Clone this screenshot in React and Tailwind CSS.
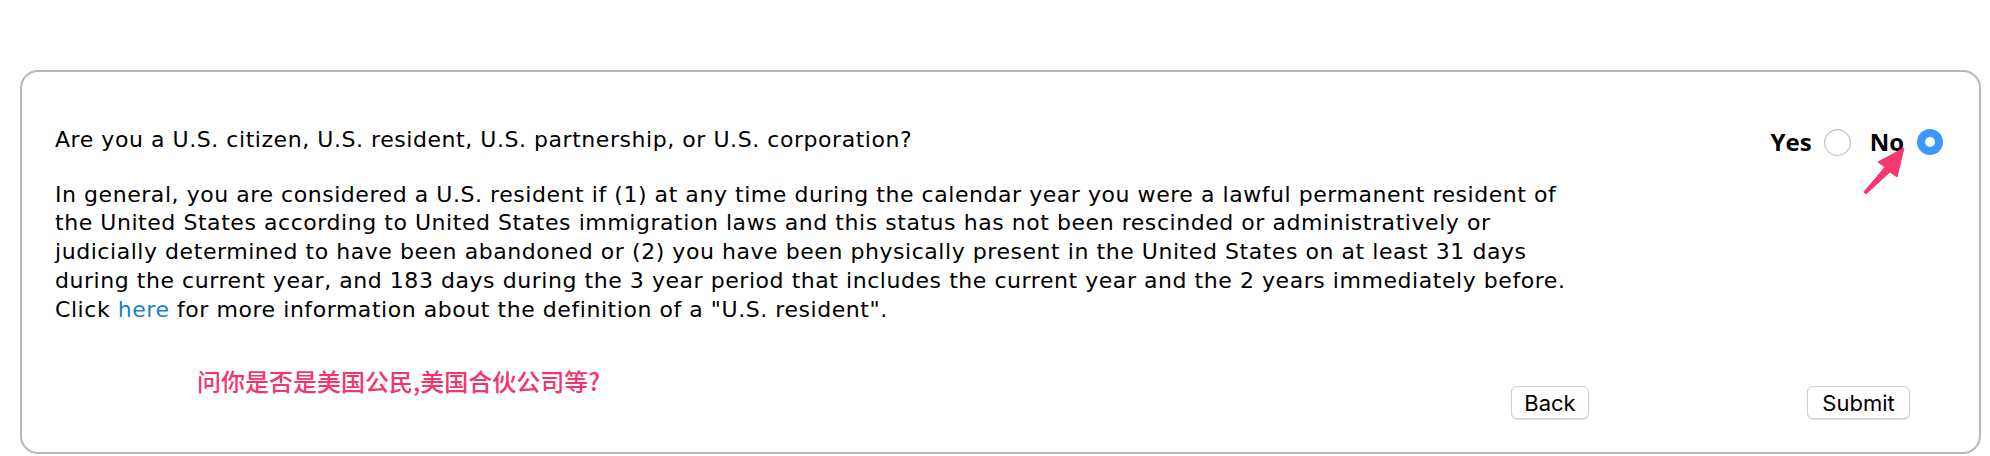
import React from "react";

function Radio({ checked }) {
  if (checked) {
    return (
      <span className="flex h-[26px] w-[26px] items-center justify-center rounded-full bg-[#3b99fc]">
        <span className="h-[10px] w-[10px] rounded-full bg-white" />
      </span>
    );
  }
  return (
    <span className="block h-[27px] w-[27px] rounded-full border border-[#b4b4b4] bg-white shadow-[inset_0_1px_1px_rgba(0,0,0,0.08)]" />
  );
}

export default function App() {
  return (
    <div className="w-[1990px] h-[456px] bg-white pt-[70px] pl-[20px] pr-[9px] overflow-hidden">
      <div className="relative flex h-[384px] flex-col rounded-[18px] border-2 border-[#b9b9b9] bg-white">
        <div className="flex items-start pt-[54px] pl-[33px]">
          <div className="font-['DejaVu_Sans',sans-serif] text-[22px] leading-[28.7px] tracking-[0.55px] text-black whitespace-nowrap">
            <div>Are you a U.S. citizen, U.S. resident, U.S. partnership, or U.S. corporation?</div>
            <div className="mt-[26px]">
              In general, you are considered a U.S. resident if (1) at any time during the calendar year you were a lawful permanent resident of
              <br />
              the United States according to United States immigration laws and this status has not been rescinded or administratively or
              <br />
              judicially determined to have been abandoned or (2) you have been physically present in the United States on at least 31 days
              <br />
              during the current year, and 183 days during the 3 year period that includes the current year and the 2 years immediately before.
              <br />
              Click <span className="text-[#1b7fcc]">here</span> for more information about the definition of a "U.S. resident".
            </div>
          </div>
          <div className="ml-auto mr-[36px] mt-[2px] flex h-[28px] items-center font-['Open_Sans',sans-serif] text-[24px] font-bold leading-[28px] text-black">
            <span>Yes</span>
            <span className="ml-[12px]"><Radio /></span>
            <span className="ml-[19px]">No</span>
            <span className="ml-[13px]"><Radio checked /></span>
          </div>
        </div>

        <div className="mt-auto flex items-start pb-[33px] pl-[175px]">
          <span className="font-['Noto_Sans_CJK_SC',sans-serif] text-[24px] font-medium leading-[24px] text-[#f2356d]">
            问你是否是美国公民,美国合伙公司等?
          </span>
          <button className="ml-auto mt-[17px] h-[33px] w-[78px] rounded-[6px] border border-[#cfcfcf] bg-white font-['Inter',sans-serif] text-[22px] leading-none text-black shadow-[0_1px_1px_rgba(0,0,0,0.12)]">
            Back
          </button>
          <button className="ml-[218px] mr-[69px] mt-[17px] h-[33px] w-[103px] rounded-[6px] border border-[#cfcfcf] bg-white font-['Inter',sans-serif] text-[22px] leading-none text-black shadow-[0_1px_1px_rgba(0,0,0,0.12)]">
            Submit
          </button>
        </div>

        <svg
          className="absolute left-[1835px] top-[72px] h-[60px] w-[60px]"
          viewBox="0 0 60 60"
        >
          <polygon
            points="6.9,48 28,23.1 21,18 47,4 40,33 33,27.9 9.1,50"
            fill="#f23a6f"
            stroke="#f23a6f"
            strokeWidth="1"
            strokeLinejoin="round"
          />
        </svg>
      </div>
    </div>
  );
}
